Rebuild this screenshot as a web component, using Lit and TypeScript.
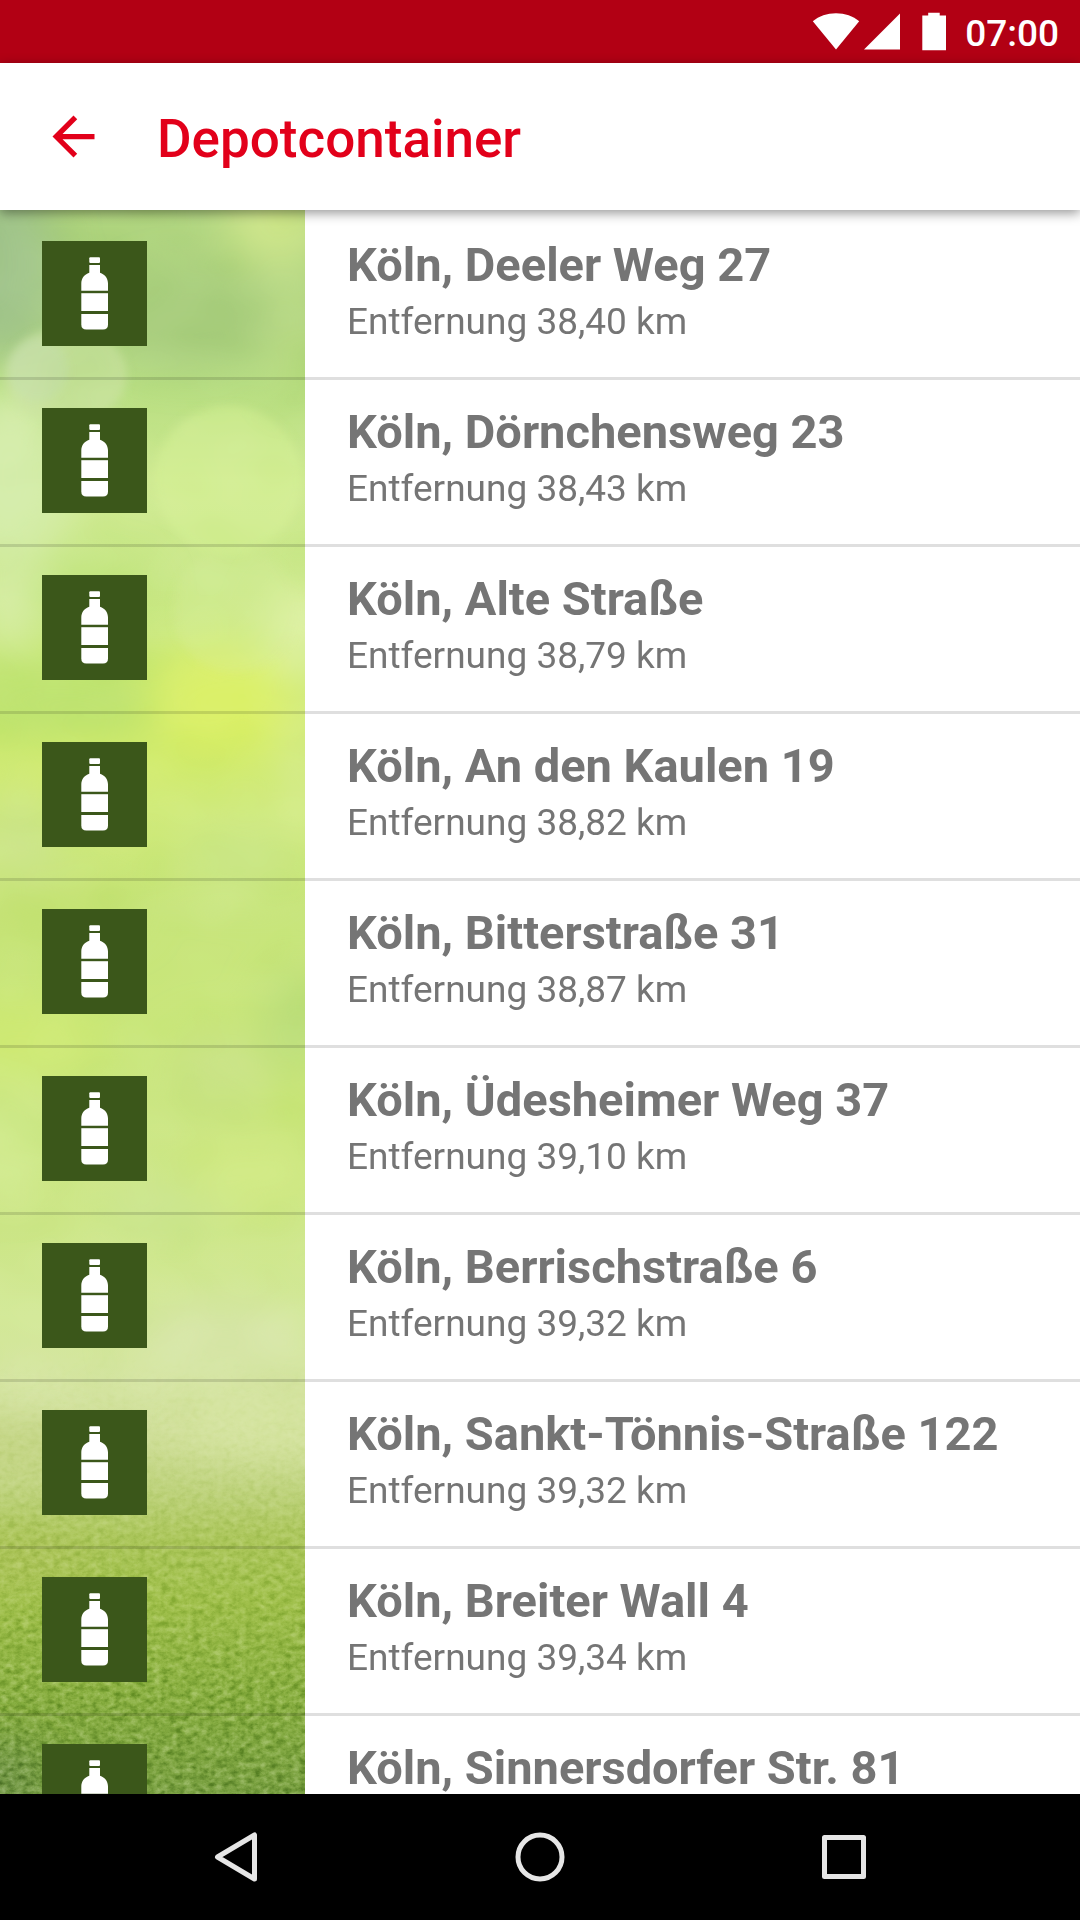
import { LitElement, html, css } from "lit";
import { customElement, property } from "lit/decorators.js";

interface Container {
  title: string;
  distance: string;
}

const CONTAINERS: Container[] = [
  { title: "Köln, Deeler Weg 27", distance: "38,40" },
  { title: "Köln, Dörnchensweg 23", distance: "38,43" },
  { title: "Köln, Alte Straße", distance: "38,79" },
  { title: "Köln, An den Kaulen 19", distance: "38,82" },
  { title: "Köln, Bitterstraße 31", distance: "38,87" },
  { title: "Köln, Üdesheimer Weg 37", distance: "39,10" },
  { title: "Köln, Berrischstraße 6", distance: "39,32" },
  { title: "Köln, Sankt-Tönnis-Straße 122", distance: "39,32" },
  { title: "Köln, Breiter Wall 4", distance: "39,34" },
  { title: "Köln, Sinnersdorfer Str. 81", distance: "" },
];

@customElement("status-bar")
class StatusBar extends LitElement {
  static styles = css`
    :host {
      display: flex;
      align-items: center;
      justify-content: flex-end;
      flex: none;
      height: 63px;
      padding-right: 21px;
      background: #b20014;
      color: #fff;
      font: 500 37px/43px Roboto, sans-serif;
    }
    .icon {
      display: block;
      fill: #fff;
    }
    .signal {
      margin: 0 22px 0 4px;
    }
    .clock {
      margin: 3px 0 0 19px;
    }
  `;
  render() {
    return html`
      <svg class="icon" width="48" height="40" viewBox="0 0 48 40">
        <path d="M.8 9.2C7 4 15 1.2 24 1.2s17 2.800 23.200 8L24 37.500z" />
      </svg>
      <svg class="icon signal" width="36" height="40" viewBox="0 0 36 40">
        <path d="M36 1.500v36H0z" />
      </svg>
      <svg class="icon" width="24" height="40" viewBox="0 0 24 40">
        <path d="M6.200.800h11.500v2.700H24v34.700H.300V3.500h5.900z" />
      </svg>
      <span class="clock">07:00</span>
    `;
  }
}

@customElement("app-bar")
class AppBar extends LitElement {
  @property() heading = "";
  static styles = css`
    :host {
      display: flex;
      align-items: center;
      flex: none;
      gap: 52px;
      height: 147px;
      padding: 0 42px;
      box-sizing: border-box;
      background: #fff;
      box-shadow: 0 3px 11px rgba(0, 0, 0, 0.42);
      position: relative;
      z-index: 1;
      color: #e2001a;
    }
    .back {
      border: 0;
      padding: 0;
      background: none;
      color: inherit;
    }
    .back svg {
      display: block;
      fill: currentColor;
    }
    .heading {
      margin: 0;
      padding-top: 4px;
      font: 500 53px/62px Roboto, sans-serif;
    }
  `;
  render() {
    return html`
      <button class="back" aria-label="Zurück">
        <svg width="63" height="63" viewBox="0 0 24 24">
          <path d="M20 11H7.830l5.590-5.590L12 4l-8 8 8 8 1.410-1.410L7.830 13H20z" />
        </svg>
      </button>
      <h1 class="heading">${this.heading}</h1>
    `;
  }
}

@customElement("meadow-backdrop")
class MeadowBackdrop extends LitElement {
  static styles = css`
    :host {
      display: block;
      overflow: hidden;
    }
    .scene {
      display: block;
      width: 100%;
      height: 100%;
    }
    .grain {
      mix-blend-mode: soft-light;
    }
  `;
  render() {
    return html`
      <svg class="scene" viewBox="0 0 305 1584" preserveAspectRatio="xMidYMin slice" aria-hidden="true">
        <defs>
          <linearGradient id="base" gradientUnits="userSpaceOnUse" x1="0" y1="0" x2="0" y2="1584">
            <stop offset="0" stop-color="#b0d57e" />
            <stop offset=".07" stop-color="#aad07e" />
            <stop offset=".11" stop-color="#b6dd80" />
            <stop offset=".17" stop-color="#cfea92" />
            <stop offset=".23" stop-color="#cae88a" />
            <stop offset=".28" stop-color="#cbe97c" />
            <stop offset=".33" stop-color="#d0ea70" />
            <stop offset=".38" stop-color="#cfea78" />
            <stop offset=".44" stop-color="#c8e57c" />
            <stop offset=".52" stop-color="#c8e678" />
            <stop offset=".57" stop-color="#cbe682" />
            <stop offset=".64" stop-color="#cee78a" />
            <stop offset=".7" stop-color="#d2e896" />
            <stop offset=".74" stop-color="#d5e5a2" />
            <stop offset=".77" stop-color="#d0df9a" />
            <stop offset=".81" stop-color="#bdd27a" />
            <stop offset=".84" stop-color="#abc65a" />
            <stop offset=".88" stop-color="#9fbf4a" />
            <stop offset=".94" stop-color="#88ae40" />
            <stop offset="1" stop-color="#789f40" />
          </linearGradient>
          <linearGradient id="fade" gradientUnits="userSpaceOnUse" x1="0" y1="1130" x2="0" y2="1480">
            <stop offset="0" stop-color="#000" />
            <stop offset=".4" stop-color="#555" />
            <stop offset="1" stop-color="#fff" />
          </linearGradient>
          <mask id="ground" maskUnits="userSpaceOnUse" x="0" y="1130" width="305" height="454">
            <rect y="1130" width="305" height="454" fill="url(#fade)" />
          </mask>
          <filter id="soft" x="-50%" y="-50%" width="200%" height="200%"><feGaussianBlur stdDeviation="22" /></filter>
          <filter id="edge" x="-20%" y="-20%" width="140%" height="140%"><feGaussianBlur stdDeviation="4" /></filter>
          <filter id="blades" x="0" y="0" width="100%" height="100%" color-interpolation-filters="sRGB">
            <feTurbulence type="fractalNoise" baseFrequency=".13 .17" numOctaves="4" seed="11" />
            <feColorMatrix values="1 1 0 0 -.5  1 1 0 0 -.5  1 1 0 0 -.5  0 0 0 0 1" />
          </filter>
          <filter id="patches" x="0" y="0" width="100%" height="100%" color-interpolation-filters="sRGB">
            <feTurbulence type="fractalNoise" baseFrequency=".012 .016" numOctaves="2" seed="3" />
            <feColorMatrix values="1.800 0 0 0 -.4  1.800 0 0 0 -.4  1.800 0 0 0 -.4  0 0 0 0 1" />
          </filter>
        </defs>
        <rect width="305" height="1584" fill="url(#base)" />
        <g filter="url(#soft)">
          <ellipse cx="0" cy="55" rx="55" ry="95" fill="#a0c48a" />
          <ellipse cx="275" cy="10" rx="50" ry="45" fill="#cfe68c" />
          <ellipse cx="190" cy="110" rx="80" ry="45" fill="#a9ce7e" />
          <ellipse cx="295" cy="115" rx="18" ry="70" fill="#bcdc82" />
          <ellipse cx="10" cy="265" rx="60" ry="85" fill="#d5edac" />
          <ellipse cx="90" cy="380" rx="60" ry="24" fill="#bfe47c" />
          <ellipse cx="5" cy="390" rx="24" ry="50" fill="#d7eda8" />
          <ellipse cx="60" cy="490" rx="110" ry="45" fill="#bee370" />
          <ellipse cx="225" cy="490" rx="75" ry="55" fill="#dbf069" />
          <ellipse cx="300" cy="420" rx="34" ry="50" fill="#e0f2a9" />
          <ellipse cx="303" cy="560" rx="12" ry="75" fill="#d9ed9c" />
          <ellipse cx="110" cy="550" rx="90" ry="22" fill="#d4ed70" />
          <ellipse cx="20" cy="630" rx="45" ry="42" fill="#cce58a" />
          <ellipse cx="240" cy="650" rx="60" ry="35" fill="#cde88b" />
          <ellipse cx="60" cy="700" rx="80" ry="30" fill="#c4e272" />
          <ellipse cx="20" cy="830" rx="80" ry="40" fill="#cee972" />
          <ellipse cx="298" cy="810" rx="34" ry="50" fill="#b9dd78" />
          <ellipse cx="300" cy="890" rx="22" ry="30" fill="#c6e46f" />
          <ellipse cx="220" cy="860" rx="50" ry="40" fill="#cbe488" />
          <ellipse cx="10" cy="930" rx="35" ry="55" fill="#d2eb90" />
          <ellipse cx="250" cy="960" rx="70" ry="40" fill="#d0e982" />
          <ellipse cx="160" cy="1000" rx="60" ry="25" fill="#cbe590" />
          <ellipse cx="220" cy="1130" rx="90" ry="40" fill="#d7e6a8" />
          <ellipse cx="270" cy="1210" rx="100" ry="35" fill="#d5e4a0" />
          <ellipse cx="10" cy="1240" rx="90" ry="24" fill="#c2d482" />
          <ellipse cx="20" cy="1350" rx="60" ry="22" fill="#adc45a" />
          <ellipse cx="0" cy="1570" rx="45" ry="35" fill="#6f9445" />
        </g>
        <g filter="url(#edge)">
          <ellipse cx="66" cy="165" rx="61" ry="48" fill="#cbe3a4" opacity=".6" />
          <ellipse cx="38" cy="160" rx="30" ry="32" fill="#c8dfb4" opacity=".4" />
          <circle cx="228" cy="270" r="74" fill="#d8f198" opacity=".5" />
          <circle cx="235" cy="400" r="62" fill="#d8eea0" opacity=".25" />
        </g>
        <rect class="grain" width="305" height="1220" filter="url(#patches)" opacity=".1" />
        <g class="grain" mask="url(#ground)">
          <rect y="1130" width="305" height="454" filter="url(#blades)" opacity=".6" />
        </g>
      </svg>
    `;
  }
}

@customElement("container-row")
class ContainerRow extends LitElement {
  @property() heading = "";
  @property() distance = "";
  static styles = css`
    :host {
      display: block;
      border-bottom: 3px solid rgba(0, 0, 0, 0.125);
    }
    .row {
      display: grid;
      grid-template-columns: 305px 1fr;
      height: 164px;
      color: #757575;
      text-decoration: none;
      font-family: Roboto, sans-serif;
    }
    .tile {
      display: block;
      width: 105px;
      height: 105px;
      margin: 28px 42px;
      background: #3b571a;
      fill: #fff;
    }
    .text {
      padding: 22px 42px 0;
    }
    .title {
      display: block;
      font-size: 47px;
      font-weight: 700;
      line-height: 60px;
    }
    .distance {
      display: block;
      font-size: 37px;
      line-height: 54px;
    }
  `;
  render() {
    return html`
      <a class="row" href="#container">
        <svg class="tile" viewBox="0 0 105 105" aria-hidden="true">
          <rect x="47.300" y="16.200" width="10.700" height="5.800" rx="1" />
          <path d="M47.300 24H58v7.800c5 1.700 8 5.700 8 10.700v7.300H39.300v-7.300c0-5 3-9 8-10.700z" />
          <path d="M39.300 52.200H66V70H39.300z" />
          <path d="M39.300 73H66v10.500q0 5-5 5H44.300q-5 0-5-5z" />
        </svg>
        <span class="text">
          <span class="title">${this.heading}</span>
          ${this.distance
            ? html`<span class="distance">Entfernung ${this.distance} km</span>`
            : null}
        </span>
      </a>
    `;
  }
}

@customElement("nav-bar")
class NavBar extends LitElement {
  static styles = css`
    :host {
      display: flex;
      flex: none;
      height: 126px;
      padding: 0 84px;
      box-sizing: border-box;
      background: #000;
    }
    .key {
      flex: 1;
      display: flex;
      align-items: center;
      justify-content: center;
      border: 0;
      padding: 0;
      background: none;
    }
    .key svg {
      fill: none;
      stroke: #e6e6e6;
      stroke-width: 5;
      stroke-linejoin: round;
    }
  `;
  render() {
    return html`
      <button class="key" aria-label="Zurück">
        <svg width="52" height="52" viewBox="0 0 52 52"><path d="M44.500 4v44L7.500 26z" /></svg>
      </button>
      <button class="key" aria-label="Startseite">
        <svg width="52" height="52" viewBox="0 0 52 52"><circle cx="26" cy="26" r="22" /></svg>
      </button>
      <button class="key" aria-label="Übersicht">
        <svg width="52" height="52" viewBox="0 0 52 52"><path d="M6.500 6.500h39v39h-39z" /></svg>
      </button>
    `;
  }
}

@customElement("app-root")
class AppRoot extends LitElement {
  static styles = css`
    :host {
      display: flex;
      flex-direction: column;
      height: 100vh;
      background: #fff;
    }
    .content {
      flex: 1;
      min-height: 0;
      display: grid;
      grid-template: minmax(0, 1fr) / 305px minmax(0, 1fr);
    }
    .backdrop {
      grid-area: 1 / 1;
    }
    .list {
      grid-area: 1 / 1 / 2 / 3;
      z-index: 0;
      list-style: none;
      margin: 0;
      padding: 3px 0 0;
      overflow-y: auto;
      scrollbar-width: none;
    }
  `;
  render() {
    return html`
      <status-bar></status-bar>
      <app-bar heading="Depotcontainer"></app-bar>
      <main class="content">
        <meadow-backdrop class="backdrop"></meadow-backdrop>
        <ul class="list">
          ${CONTAINERS.map(
            (c) => html`<li>
              <container-row .heading=${c.title} .distance=${c.distance}></container-row>
            </li>`
          )}
        </ul>
      </main>
      <nav-bar></nav-bar>
    `;
  }
}
